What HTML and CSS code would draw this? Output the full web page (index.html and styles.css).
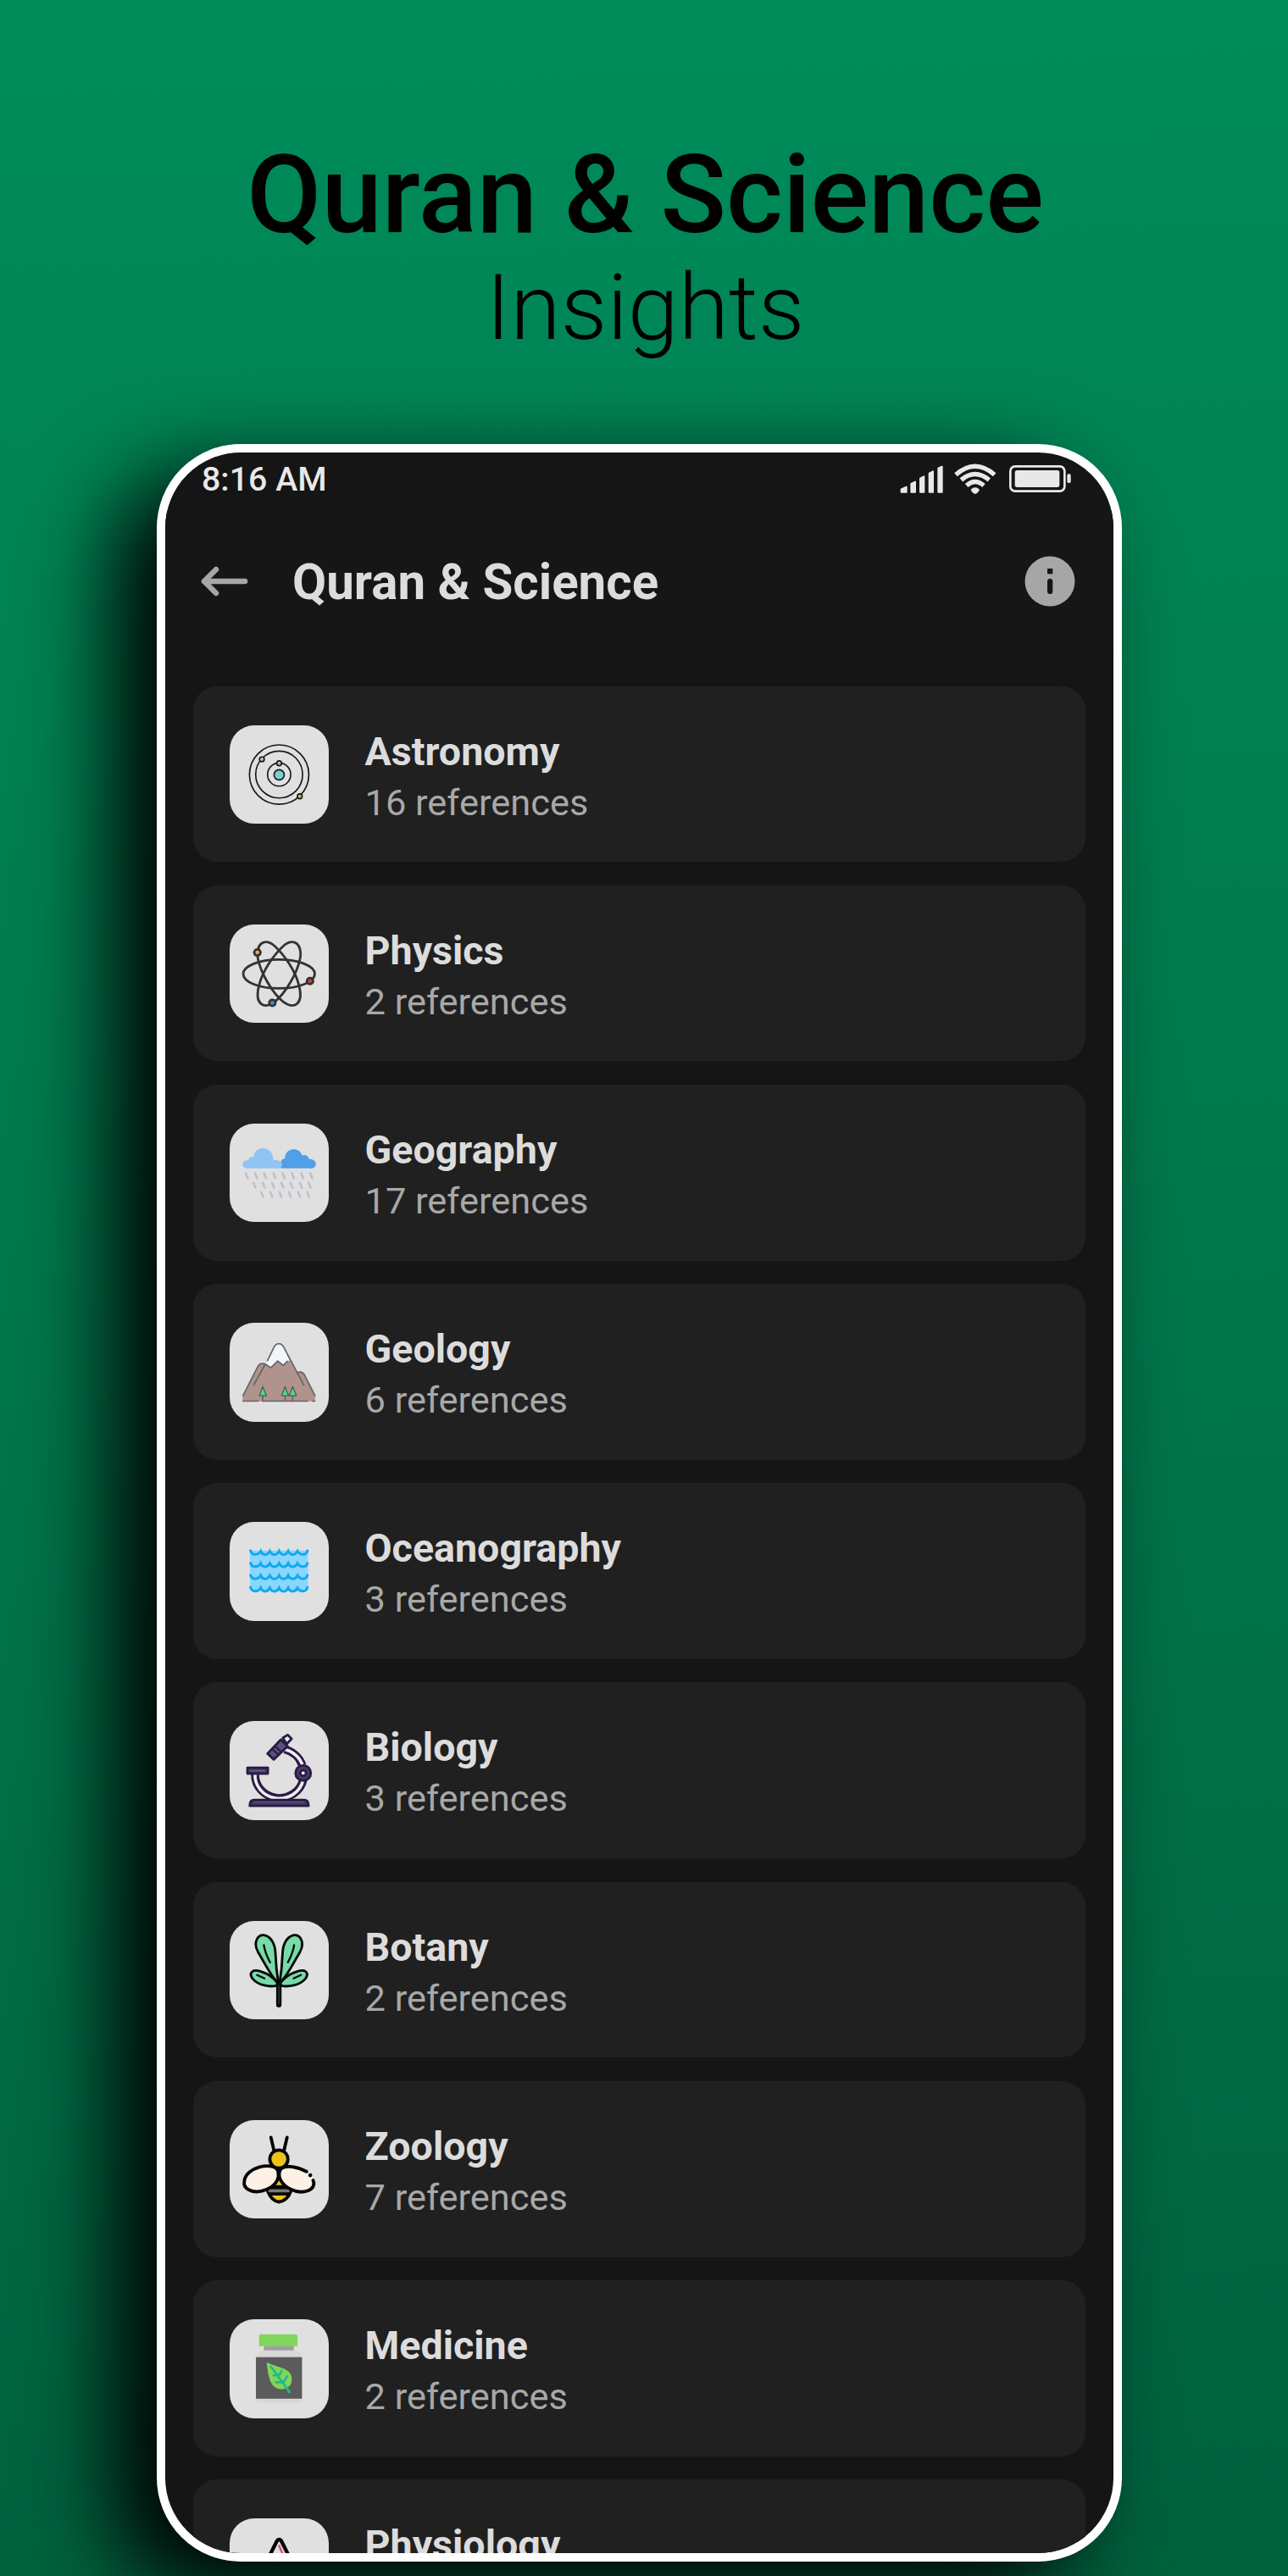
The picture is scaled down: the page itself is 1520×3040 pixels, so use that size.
FILE: index.html
```html
<!DOCTYPE html>
<html lang="en">
<head>
<meta charset="utf-8">
<title>Quran &amp; Science Insights</title>
<link rel="stylesheet" href="styles.css">
</head>
<body>
<main class="poster">
  <header class="headline">
    <h1 class="headline-title">Quran &amp; Science</h1>
    <p class="headline-sub">Insights</p>
  </header>

  <section class="phone">
    <div class="statusbar">
      <span class="clock">8:16 AM</span>
      <svg class="status-icons" viewBox="480 135 621 120" fill="#e8e8e8">
        <g stroke="#e8e8e8" stroke-width="6" stroke-linejoin="round">
          <path d="M491 232L509 224V242H491ZM526 213L540 206V242H526ZM558 194L571 187V242H558ZM590 176L603 169V242H590ZM622 158L635 152V242H622Z"/>
        </g>
        <g fill="none" stroke="#e8e8e8" stroke-width="16">
          <path d="M684 181Q752 121 821 181"/>
          <path d="M703 199Q752 158 802 199"/>
          <path d="M722 219Q752 192 783 219"/>
        </g>
        <path d="M737 233Q752 219 768 233Q764 245 752 249Q741 245 737 233Z"/>
        <rect x="877" y="151" width="192" height="88" rx="17" fill="none" stroke="#e8e8e8" stroke-width="8"/>
        <rect x="893" y="165" width="158" height="60" rx="8"/>
        <rect x="1078" y="178" width="13" height="32" rx="5"/>
      </svg>
    </div>

    <div class="appbar">
      <svg class="back" viewBox="0 0 56 36" fill="none" stroke="#a6a6a6" stroke-width="6.500" stroke-linecap="round" stroke-linejoin="round">
        <path d="M52 18H4M18 4L4 18L18 32"/>
      </svg>
      <h2 class="appbar-title">Quran &amp; Science</h2>
      <svg class="info" viewBox="0 0 60 60">
        <circle cx="30" cy="30" r="29.500" fill="#a6a6a6"/>
        <rect x="27" y="15" width="6.300" height="6.300" fill="#151515"/>
        <rect x="27" y="27" width="6.300" height="18" rx="3" fill="#151515"/>
      </svg>
    </div>

    <ul class="topics">
      <li class="topic">
        <svg class="tile" viewBox="153 167 349 349" fill="none" stroke="#181818" stroke-width="5">
          <circle cx="328" cy="341" r="105"/><circle cx="328" cy="341" r="83"/><circle cx="328" cy="341" r="41"/>
          <circle cx="328" cy="342" r="18" fill="#78d0d0"/>
          <circle cx="267" cy="287" r="8.500" fill="#adc4ea"/><circle cx="328" cy="301" r="8.500" fill="#b6b6de"/><circle cx="401" cy="418" r="8.500" fill="#d9b45c"/>
        </svg>
        <div class="topic-text"><h3>Astronomy</h3><p>16 references</p></div>
      </li>
      <li class="topic">
        <svg class="tile" viewBox="34 62 349 349" fill="none" stroke="#333" stroke-width="8.500">
          <ellipse cx="208.500" cy="237" rx="126.500" ry="51"/>
          <path d="M132 165C135 119 166 114 194 139C229 171 267 228 279 277C297 346 261 363 223 335C184 304 145 233 135 187Q132 174 132 165"/>
          <path d="M285 165C282 119 251 114 223 139C188 171 150 228 138 277C120 346 156 363 194 335C233 304 272 233 282 187Q285 174 285 165"/>
          <circle cx="132" cy="161" r="11" fill="#e6ad43"/><circle cx="318" cy="262" r="11" fill="#d2452f"/><circle cx="185" cy="339" r="11" fill="#3797d5"/>
        </svg>
        <div class="topic-text"><h3>Physics</h3><p>2 references</p></div>
      </li>
      <li class="topic">
        <svg class="tile" viewBox="34 48 349 349">
          <path fill="#509fe8" d="M215 206C210 175 222 174 229 171C232 130 281 130 290 160Q308 154 316 174C344 172 346 206 324 206Z"/>
          <path fill="#91c4f4" d="M94 206C72 204 75 175 99 178Q104 164 119 163C124 125 180 125 187 165Q187 171 190 177C225 172 226 205 207 206Z"/>
          <g stroke="#bfc0cc" stroke-width="8" stroke-linecap="round">
            <path d="M91 224L98 241M124 224L131 241M156 224L163 241M189 224L196 241M221 224L228 241M254 224L261 241M287 224L294 241M319 224L326 241M118 257L125 274M151 257L158 274M184 257L191 274M217 257L224 274M249 257L256 274M282 257L289 274M313 257L320 274M145 290L152 307M178 290L185 307M210 290L217 307M243 290L250 307M276 290L283 307M308 290L315 307"/>
          </g>
        </svg>
        <div class="topic-text"><h3>Geography</h3><p>17 references</p></div>
      </li>
      <li class="topic">
        <svg class="tile" viewBox="34 63 349 349" stroke-linejoin="round">
          <path fill="#b0938c" d="M80 341V323L133 219Q142 202 160 209L193 144Q208 128 223 144L272 237Q290 233 299 248L336 323V341Z"/>
          <path fill="#f0f6f9" d="M160 209L194 145Q208 129 222 145L246 196L238 199L224 214L204 198L180 222Z"/>
          <g fill="none" stroke="#64646b" stroke-width="5" stroke-linecap="round">
            <path d="M81 321L133 219Q142 202 160 209L180 222L204 198L224 214L238 199M168 197L193 145Q208 129 223 145L296 283M160 209L120 282M274 239Q290 233 299 248L336 321"/>
            <path d="M81 340H135M150 340H310M327 340H336M151 322V336M230 322V336M257 322V336"/>
          </g>
          <g fill="#55d98c" stroke="#476159" stroke-width="4"><path d="M151 289L139 321H164ZM230 289L218 321H242ZM257 289L244 321H270Z"/></g>
        </svg>
        <div class="topic-text"><h3>Geology</h3><p>6 references</p></div>
      </li>
      <li class="topic">
        <svg class="tile" viewBox="34 49 349 349">
          <path fill="#8ad6ff" d="M106 150H311V282Q308 296 294 296L120 292Q107 290 106 278Z"/>
          <g fill="none" stroke="#12a9ee" stroke-width="9">
            <path d="M107 147C111 170 135 168 144 152C151 169 167 169 176 152C184 169 200 169 209 152C217 169 233 169 241 152C249 169 265 169 274 152C283 168 306 170 310 147"/>
            <path d="M107 191C111 213 135 211 144 195C151 212 167 212 176 195C184 212 200 212 209 195C217 212 233 212 241 195C249 212 265 212 274 195C283 211 306 213 310 191"/>
            <path d="M107 234C111 256 135 254 144 238C151 255 167 255 176 238C184 255 200 255 209 238C217 255 233 255 241 238C249 255 265 255 274 238C283 254 306 256 310 234"/>
            <path d="M107 277C111 300 135 298 144 282C151 299 167 299 176 282C184 299 200 299 209 282C217 299 233 299 241 282C249 299 265 299 274 282C283 298 306 300 310 277"/>
          </g>
        </svg>
        <div class="topic-text"><h3>Oceanography</h3><p>3 references</p></div>
      </li>
      <li class="topic">
        <svg class="tile" viewBox="34 65 349 349" stroke="#2a1b45" stroke-width="8.500" stroke-linejoin="round">
          <path d="M124 254A86 82 0 0 0 294 273M228 165A90 88 0 0 1 291 222" fill="none" stroke-width="29"/>
          <path d="M124 250A86 82 0 0 0 294 273M222 164A90 88 0 0 1 293 225" fill="none" stroke="#f0eef2" stroke-width="11"/>
          <rect x="97" y="230" width="72" height="21" fill="#453c66"/>
          <path d="M107 241H160" stroke="#77718f" stroke-width="3"/>
          <path d="M105 365Q105 344 121 344H297Q313 344 313 365Z" fill="#453c66"/>
          <path d="M121 351H297" stroke="#605a7c" stroke-width="3"/>
          <path d="M222 125L239 114L253 128L236 146Z" fill="#f0eef2"/>
          <path d="M168 180L215 131L239 154L190 201Z" fill="#5a5377"/>
          <path d="M184 164L207 184M194 154L217 174" stroke-width="6"/>
          <circle cx="294" cy="249" r="27" fill="#453c66"/><circle cx="294" cy="249" r="10" fill="#fff"/>
        </svg>
        <div class="topic-text"><h3>Biology</h3><p>3 references</p></div>
      </li>
      <li class="topic">
        <svg class="tile" viewBox="34 50 349 349" stroke="#060a09" stroke-width="8.500" stroke-linecap="round" stroke-linejoin="round" fill="#77dba7">
          <path d="M202 278C175 285 136 278 115 254C99 230 118 218 149 230Q182 241 202 268Z"/>
          <path d="M214 278C242 285 281 278 302 254C318 230 299 218 268 230Q235 241 214 268Z"/>
          <path d="M202 267Q183 245 165 213L135 161C116 128 132 98 155 100C180 104 195 130 196 165Q198 220 206 267Z"/>
          <path d="M214 267Q234 245 252 213L282 161C301 128 285 98 262 100C237 104 222 130 221 165Q219 220 211 267Z"/>
          <path d="M155 135Q159 163 177 196M262 135Q258 163 240 196M131 241L157 253M286 241L260 253" fill="none" stroke-width="7"/>
          <path d="M208 271V346" stroke-width="19"/><path d="M208 280V342" stroke="#17483d" stroke-width="4"/>
        </svg>
        <div class="topic-text"><h3>Botany</h3><p>2 references</p></div>
      </li>
      <li class="topic">
        <svg class="tile" viewBox="34 65 349 349" stroke="#050505" stroke-width="11.500" stroke-linecap="round" stroke-linejoin="round">
          <path d="M180 126L190 169M237 126L227 169" fill="none"/>
          <path d="M208 255L169 294V317Q182 351 208 354Q238 351 250 317V294Z" fill="#edc11f"/>
          <path d="M176 301H242V326H176Z" fill="#050505"/>
          <path d="M176 315H241" stroke="#777"/>
          <circle cx="208" cy="203" r="32" fill="#efc21a"/>
          <path d="M204 242C184 211 91 231 86 281C80 309 116 325 151 315C189 304 215 278 204 242Z" fill="#fdf1e5"/>
          <path d="M319 259C325 262 328 267 332 273C336 316 288 326 251 310C219 296 200 265 214 239C230 220 277 231 306 247Z" fill="#fdf1e5" stroke="none"/>
          <path d="M306 247C277 231 230 220 214 239C200 265 219 296 251 310C292 330 344 312 329 278" fill="none"/>
          <circle cx="319" cy="260" r="7" fill="#050505" stroke="none"/>
        </svg>
        <div class="topic-text"><h3>Zoology</h3><p>7 references</p></div>
      </li>
      <li class="topic">
        <svg class="tile" viewBox="34 771 349 349">
          <path fill="#d8d8d8" d="M128 906Q130 884 154 881H264Q287 884 290 906Z"/>
          <path fill="#d8d8d8" d="M127 1052H290V1058Q288 1068 278 1068H140Q128 1068 127 1058Z"/>
          <rect x="155" y="864" width="106" height="17" fill="#a0a0a0"/>
          <path fill="#82d55b" d="M138 866V831Q139 824 146 824H267Q274 824 274 831V866Z"/>
          <rect x="127" y="905" width="163" height="147" fill="#5b5b5b"/>
          <path fill="#82d55b" d="M165 923C199 940 240 943 251 967C262 1002 239 1020 214 1018C177 1016 170 970 165 923Z"/>
          <path d="M180 938L246 1029M190 970L211 967L218 953M198 994H225L237 973" fill="none" stroke="#23b98b" stroke-width="8" stroke-linejoin="round" stroke-linecap="round"/>
        </svg>
        <div class="topic-text"><h3>Medicine</h3><p>2 references</p></div>
      </li>
      <li class="topic">
        <svg class="tile" viewBox="0 0 349 349" fill="none" stroke-linejoin="round">
          <path d="M174 94L195 144" stroke="#e0577d" stroke-width="8"/>
          <path d="M140 134L167 80Q175 70 183 80L210 134" stroke="#060606" stroke-width="13"/>
        </svg>
        <div class="topic-text"><h3>Physiology</h3></div>
      </li>
    </ul>
  </section>
</main>
</body>
</html>
```
FILE: styles.css
```css
* { box-sizing: border-box; }

body {
  margin: 0;
  font-family: Roboto, "Liberation Sans", sans-serif;
}

h1, h2, h3, p, ul { margin: 0; padding: 0; }

.poster {
  width: 1520px;
  height: 3040px;
  overflow: hidden;
  background: linear-gradient(178deg, #008c5a 0%, #00613e 100%);
}

.headline {
  height: 524px;
  padding-top: 155px;
  padding-left: 3px;
  text-align: center;
  color: #000;
}

.headline-title {
  font-size: 128px;
  font-weight: 500;
  line-height: 150px;
}

.headline-sub {
  font-size: 108px;
  font-weight: 300;
  line-height: 116px;
}

.phone {
  width: 1139px;
  height: 2499px;
  margin-left: 185px;
  border: 10px solid #fff;
  border-radius: 99px;
  overflow: hidden;
  background: #151515;
  box-shadow: -50px 35px 105px #000;
}

.statusbar {
  display: flex;
  justify-content: space-between;
  align-items: flex-start;
  height: 68px;
  padding: 11px 47px 0 43px;
}

.clock {
  font-size: 39.300px;
  font-weight: 500;
  line-height: 43px;
  color: #e8e8e8;
}

.status-icons {
  width: 207px;
  height: 40px;
}

.appbar {
  display: flex;
  align-items: center;
  height: 169px;
  padding: 0 45px 0 42px;
  border-bottom: 1px solid #121212;
  background: #161616;
}

.back {
  width: 56px;
  height: 36px;
}

.appbar-title {
  flex: 1;
  padding: 1px 0 0 52px;
  font-size: 58.300px;
  font-weight: 700;
  line-height: 70px;
  color: #dcdcdc;
}

.info {
  width: 60px;
  height: 60px;
}

.topics {
  display: flex;
  flex-direction: column;
  gap: 27.500px;
  padding: 38.500px 33px 0;
  list-style: none;
}

.topic {
  display: flex;
  align-items: flex-start;
  flex: none;
  height: 207.700px;
  padding: 46px 0 0 43px;
  border-radius: 28px;
  background: #202020;
}

.tile {
  flex: none;
  width: 116.500px;
  height: 116.500px;
  border-radius: 29px;
  background: #e0e0e0;
}

.topic-text {
  padding: 2px 0 0 43px;
}

.topic-text h3 {
  font-size: 46.600px;
  font-weight: 700;
  line-height: 59px;
  color: #dcdcdc;
}

.topic-text p {
  font-size: 43.400px;
  font-weight: 400;
  line-height: 61px;
  color: #a8a8a8;
}
```
